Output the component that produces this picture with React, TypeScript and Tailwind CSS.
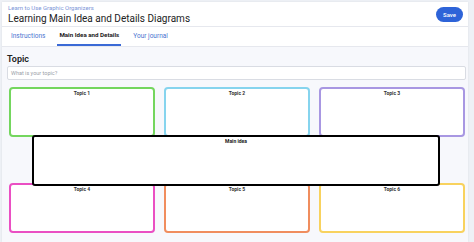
import React from "react";

const topics = [
  { label: "Topic 1", color: "border-[#74d65e]" },
  { label: "Topic 2", color: "border-[#86d4ee]" },
  { label: "Topic 3", color: "border-[#a897e2]" },
];
const topics2 = [
  { label: "Topic 4", color: "border-[#ea4fc3]" },
  { label: "Topic 5", color: "border-[#f08d5e]" },
  { label: "Topic 6", color: "border-[#f8d25e]" },
];

function Box({ label, color }: { label: string; color: string }) {
  return (
    <div className={`h-[50px] rounded-[4px] border-2 bg-white ${color} flex justify-center pt-[1px]`}>
      <span className="text-[5px] font-bold text-[#333] leading-[6px]">{label}</span>
    </div>
  );
}

export default function App() {
  return (
    <div
      className="w-[474px] h-[242px] bg-[#eef1f6] overflow-hidden"
      style={{ fontFamily: "Roboto, 'Noto Sans', sans-serif" }}
    >
      <div className="ml-[2px] mt-[2px] w-[466px] h-[240px] bg-white shadow-[0_0_2px_rgba(0,0,0,0.08)] flex flex-col">
        <div className="h-[25px] pl-[6px] pr-[5px] flex items-center justify-between border-b border-[#e6e8ee]">
          <div className="flex flex-col">
            <span className="text-[6px] leading-[8px] text-[#7d96d8]">Learn to Use Graphic Organizers</span>
            <span className="text-[10px] leading-[13px] text-[#222]">Learning Main Idea and Details Diagrams</span>
          </div>
          <div className="w-[27px] h-[15px] rounded-full bg-[#2d63d8] text-white text-[6px] font-medium flex items-center justify-center">
            Save
          </div>
        </div>
        <div className="h-[20px] flex items-end pl-[7px] border-b border-[#e6e8ee]">
          <div className="px-[2px] h-[19px] flex items-center text-[6.5px] text-[#4b74d0]">Instructions</div>
          <div className="ml-[10px] px-[2px] h-[19px] flex items-center text-[6.2px] font-bold text-[#222] border-b-2 border-[#3b6ad6]">
            Main Idea and Details
          </div>
          <div className="ml-[10px] px-[2px] h-[19px] flex items-center text-[6.5px] text-[#4b74d0]">Your journal</div>
        </div>
        <div className="flex-1 bg-[#f7f8fc] px-[5px] pt-[7px] relative">
          <div className="text-[9px] font-semibold text-[#222] leading-[10px]">Topic</div>
          <div className="mt-[2px] h-[14px] w-[459px] bg-white border border-[#d9dce3] rounded-[2px] flex items-center px-[3px]">
            <span className="text-[5.5px] text-[#9aa0a8]">What is your topic?</span>
          </div>
          <div className="mt-[7px] ml-[2px] w-[456px] grid grid-cols-3 gap-x-[9px] gap-y-[46px]">
            {topics.map((t) => (
              <Box key={t.label} {...t} />
            ))}
            {topics2.map((t) => (
              <Box key={t.label} {...t} />
            ))}
          </div>
          <div className="absolute left-[30px] top-[88px] w-[408px] h-[51px] bg-white border-2 border-black rounded-[3px] flex justify-center pt-[1px]">
            <span className="text-[5px] font-bold text-[#222] leading-[6px]">Main idea</span>
          </div>
        </div>
      </div>
    </div>
  );
}
